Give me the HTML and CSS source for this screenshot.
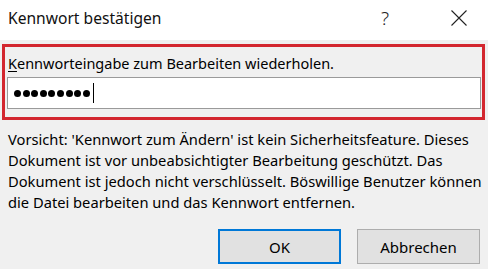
FILE: index.html
```html
<!DOCTYPE html>
<html lang="de">
<head>
<meta charset="utf-8">
<title>Kennwort bestätigen</title>
<link rel="stylesheet" href="styles.css">
</head>
<body>
<div class="dialog">
  <div class="titlebar">
    <div class="title">Kennwort bestätigen</div>
    <div class="tb-buttons">
      <span class="help">?</span>
      <span class="close">
        <svg width="16" height="16" viewBox="0 0 16 16"><path d="M0.5 0.5 L15.5 15.5 M15.5 0.5 L0.5 15.5" stroke="#222" stroke-width="1.1" fill="none"/></svg>
      </span>
    </div>
  </div>
  <div class="content">
    <div class="group">
      <div class="label"><span class="ak">K</span>ennworteingabe zum Bearbeiten wiederholen.</div>
      <div class="input">
        <span class="dots"><i></i><i></i><i></i><i></i><i></i><i></i><i></i><i></i><i></i></span>
        <span class="caret"></span>
      </div>
    </div>
    <p class="warning">Vorsicht: 'Kennwort zum Ändern' ist kein Sicherheitsfeature. Dieses Dokument ist vor unbeabsichtigter Bearbeitung geschützt. Das Dokument ist jedoch nicht verschlüsselt. Böswillige Benutzer können die Datei bearbeiten und das Kennwort entfernen.</p>
    <div class="buttons">
      <button class="btn default">OK</button>
      <button class="btn">Abbrechen</button>
    </div>
  </div>
</div>
</body>
</html>
```
FILE: styles.css
```css
* { box-sizing: border-box; }
html, body { margin: 0; padding: 0; }
body {
  width: 488px;
  height: 269px;
  background: #f0f0f0;
  font-family: "Noto Sans", "Open Sans", sans-serif;
  color: #000;
  overflow: hidden;
}
.dialog { display: flex; flex-direction: column; height: 269px; }
.titlebar {
  height: 40px;
  background: #fff;
  display: flex;
  align-items: center;
  justify-content: space-between;
}
.title {
  padding-left: 8px;
  font-size: 15.6px;
  color: #111;
  padding-bottom: 4px;
}
.tb-buttons { display: flex; align-items: center; height: 100%; }
.help {
  font-size: 19px;
  font-weight: 300;
  color: #222;
  width: 20px;
  text-align: center;
  margin-right: 56px;
  padding-bottom: 4px;
}
.close { width: 16px; height: 16px; margin-right: 21px; display: flex; margin-bottom: 4px; }
.content { display: flex; flex-direction: column; flex: 1; }
.group {
  margin: 4px 3px 0 2px;
  border: 3px solid #d3272f;
  padding: 0 1px 8px 2px;
}
.label {
  font-size: 14.5px;
  line-height: 20px;
  padding: 6px 0 0 1px;
  margin-bottom: 4px;
}
.ak { text-decoration: underline; text-underline-offset: 2px; }
.input {
  height: 32px;
  background: #fff;
  border: 1px solid #9a9a9a;
  display: flex;
  align-items: center;
  padding-left: 6px;
}
.dots { display: flex; gap: 1.6px; }
.dots i {
  display: block;
  width: 7px;
  height: 7px;
  border-radius: 50%;
  background: #000;
}
.caret { width: 1px; height: 20px; background: #000; margin-left: 3px; }
.warning {
  margin: 9px 2px 0 8px;
  font-size: 14.7px;
  line-height: 21px;
}
.buttons {
  margin-top: auto;
  margin-bottom: 5px;
  display: flex;
  justify-content: flex-end;
  gap: 16px;
  padding-right: 8px;
}
.btn {
  width: 123px;
  height: 35px;
  background: #e1e1e1;
  border: 1px solid #adadad;
  font-family: inherit;
  font-size: 15px;
  color: #000;
  padding: 0;
}
.btn.default { border: 2px solid #0078d7; }
```
